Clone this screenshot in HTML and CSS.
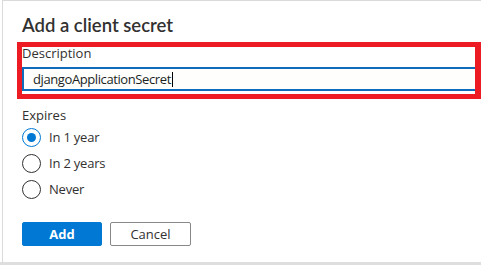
FILE: index.html
```html
<!DOCTYPE html>
<html>
<head>
<meta charset="utf-8">
<link rel="stylesheet" href="styles.css">
</head>
<body>
<div class="page">
  <div class="panel">
    <h1 class="title">Add a client secret</h1>
    <div class="field">
      <label class="label">Description</label>
      <div class="input"><span class="value">djangoApplicationSecret</span><span class="caret"></span></div>
    </div>
    <div class="field expires">
      <div class="label">Expires</div>
      <div class="radios">
        <div class="radio-row"><span class="radio checked"></span><span class="radio-text">In 1 year</span></div>
        <div class="radio-row"><span class="radio"></span><span class="radio-text">In 2 years</span></div>
        <div class="radio-row"><span class="radio"></span><span class="radio-text">Never</span></div>
      </div>
    </div>
    <div class="actions">
      <button class="btn primary">Add</button>
      <button class="btn secondary">Cancel</button>
    </div>
    <div class="highlight"></div>
  </div>
  <div class="bottom-band"></div>
</div>
</body>
</html>
```
FILE: styles.css
```css
html, body {
  margin: 0;
  padding: 0;
  background: #ffffff;
}
body {
  width: 481px;
  height: 265px;
  overflow: hidden;
  font-family: "Open Sans", "Noto Sans", sans-serif;
  color: #323130;
}
.page {
  width: 481px;
  height: 265px;
  display: flex;
  flex-direction: column;
}
.panel {
  position: relative;
  margin-left: 2px;
  height: 261px;
  border-left: 1px solid #dadada;
  border-top: 1px solid #dadada;
  padding-left: 19px;
  box-sizing: content-box;
  overflow: hidden;
}
.bottom-band {
  height: 3px;
  background: #dedede;
}
.title {
  margin: 12px 0 0 0;
  font-family: Lato, "Open Sans", sans-serif;
  font-size: 18.5px;
  line-height: 24px;
  font-weight: 600;
  color: #323130;
}
.field {
  display: flex;
  flex-direction: column;
}
.label {
  font-size: 13px;
  line-height: 18px;
  margin-top: 7px;
}
.input {
  margin-top: 5px;
  height: 24px;
  width: 470px;
  box-sizing: border-box;
  border: 2px solid #0f6cbd;
  background: #fefffd;
  padding-left: 9px;
  display: flex;
  align-items: center;
  font-size: 13px;
  line-height: 20px;
  letter-spacing: -0.4px;
  color: #201f1e;
}
.caret {
  display: inline-block;
  width: 1px;
  height: 15px;
  background: #000;
  margin-left: 1px;
}
.expires .label {
  margin-top: 15px;
}
.radios {
  display: flex;
  flex-direction: column;
}
.radio-row {
  height: 26px;
  display: flex;
  align-items: center;
  gap: 8px;
}
.radio {
  width: 19px;
  height: 19px;
  box-sizing: border-box;
  border: 1px solid #323130;
  border-radius: 50%;
  display: flex;
  align-items: center;
  justify-content: center;
}
.radio.checked {
  border-color: #0078d4;
}
.radio.checked::after {
  content: "";
  width: 9px;
  height: 9px;
  border-radius: 50%;
  background: #0078d4;
}
.radio-text {
  font-size: 13px;
  line-height: 18px;
  letter-spacing: -0.2px;
}
.actions {
  margin-top: 20px;
  display: flex;
  gap: 8px;
}
.btn {
  width: 80px;
  height: 24px;
  box-sizing: border-box;
  font-family: "Open Sans", "Noto Sans", sans-serif;
  font-size: 13px;
  padding: 0;
  border-radius: 2px;
}
.btn.primary {
  background: #0078d4;
  border: 1px solid #0078d4;
  color: #ffffff;
  font-weight: 700;
}
.btn.secondary {
  background: #ffffff;
  border: 1px solid #8a8886;
  color: #323130;
  font-weight: 400;
  width: 81px;
}
.highlight {
  position: absolute;
  left: 14px;
  top: 41px;
  width: 464px;
  height: 57px;
  box-sizing: border-box;
  border-style: solid;
  border-color: #ed1c24;
  border-width: 5px 6px 5px 5px;
  pointer-events: none;
}
```
